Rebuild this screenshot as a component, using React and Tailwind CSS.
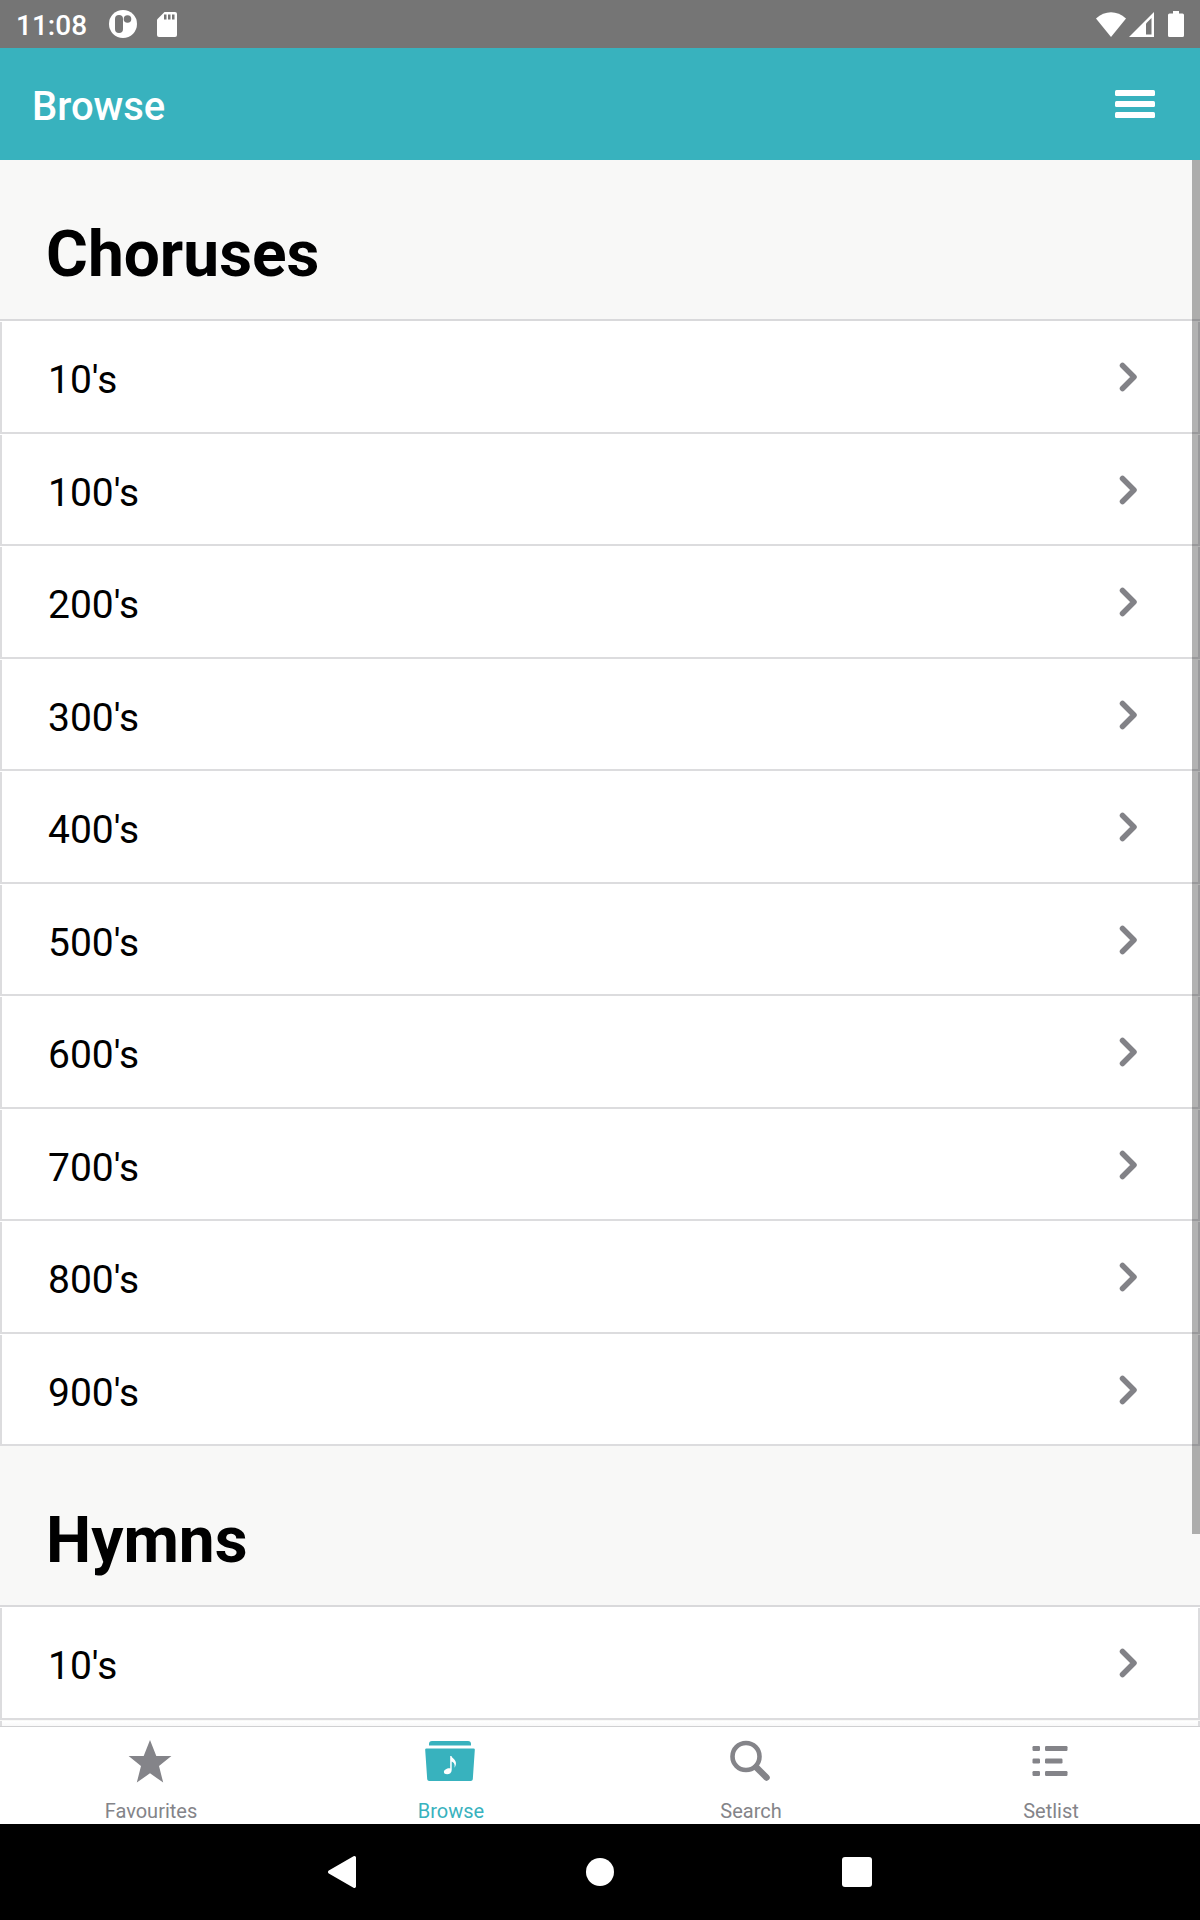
import { useState } from 'react'

const sections = [
    {
        title: 'Choruses',
        items: ["10's", "100's", "200's", "300's", "400's", "500's", "600's", "700's", "800's", "900's"],
    },
    {
        title: 'Hymns',
        items: ["10's"],
    },
]

function StarIcon() {
    return (
        <svg className="h-11 w-13" viewBox="0 0 52 44" fill="currentColor">
            <path d="M26 1l6.3 16H47.4L35 27l4.2 16.6L26 34.2l-13.2 9.4L17 27 4.6 17h15.1z" />
        </svg>
    )
}

function BrowseIcon() {
    return (
        <svg className="h-11 w-13" viewBox="0 0 52 44" fill="currentColor">
            <path d="M5 6.5V5a3 3 0 0 1 3-3h36a3 3 0 0 1 3 3v1.5z" />
            <path
                fillRule="evenodd"
                d="M2.5 9.5h47a1.3 1.3 0 0 1 1.3 1.5l-2 29.3a2 2 0 0 1-2 1.7H5.2a2 2 0 0 1-2-1.7L1.2 11a1.3 1.3 0 0 1 1.3-1.5zM26.2 17v12.4c-3.2-.4-6.3 1.6-6.3 3.7 0 1.5 1.3 2.2 3.2 2.2 2.5 0 4.6-1.5 4.6-4.3V22.5c2.2.8 3.5 2.9 2.7 6.2 2.4-3.5 1.8-6.3-.3-8.5C28.6 18.900 27.6 18 27.5 17z"
            />
        </svg>
    )
}

function SearchIcon() {
    return (
        <svg className="h-11 w-13" viewBox="0 0 52 44" fill="none" stroke="currentColor">
            <circle cx="22" cy="17.5" r="13.5" strokeWidth="4.6" />
            <path d="M32.5 28.5l10 10" strokeWidth="6.5" strokeLinecap="round" />
        </svg>
    )
}

function SetlistIcon() {
    return (
        <svg className="h-11 w-13" viewBox="0 0 52 44" fill="currentColor">
            <rect x="8.5" y="7" width="7.5" height="5" rx="1.2" />
            <rect x="21" y="7" width="22.5" height="5" rx="1.2" />
            <rect x="8.5" y="19.5" width="7.5" height="5" rx="1.2" />
            <rect x="21" y="19.5" width="17.5" height="5" rx="1.2" />
            <rect x="8.5" y="32" width="7.5" height="5" rx="1.2" />
            <rect x="21" y="32" width="22.5" height="5" rx="1.2" />
        </svg>
    )
}

const tabs = [
    { id: 'favourites', label: 'Favourites', Icon: StarIcon },
    { id: 'browse', label: 'Browse', Icon: BrowseIcon },
    { id: 'search', label: 'Search', Icon: SearchIcon },
    { id: 'setlist', label: 'Setlist', Icon: SetlistIcon },
]

function StatusBar() {
    return (
        <div className="flex h-12 shrink-0 items-center justify-between bg-[#757575] px-4 text-white">
            <div className="flex items-center">
                <span className="pt-1 text-[28px] leading-8 font-medium">11:08</span>
                <svg className="ml-[22px] h-7 w-7" viewBox="0 0 28 28">
                    <circle cx="14" cy="14" r="14" fill="white" />
                    <rect x="6" y="5" width="8" height="18" rx="4" fill="#757575" />
                    <circle cx="18.5" cy="9" r="3.8" fill="#757575" />
                </svg>
                <svg className="ml-5 h-[25px] w-5" viewBox="0 0 20 25">
                    <path d="M7.5 0H18a2 2 0 0 1 2 2v21a2 2 0 0 1-2 2H2a2 2 0 0 1-2-2V7.5z" fill="white" />
                    <path d="M7 2.5h2.5v5H7zM11 2.5h2.5v5H11zM15 2.5h2.5v5H15z" fill="#757575" />
                </svg>
            </div>
            <div className="flex items-center">
                <svg className="h-[25px] w-[30px]" viewBox="0 0 30 25" fill="white">
                    <path d="M15 25L0 6.5C9 -2 21 -2 30 6.5z" />
                </svg>
                <svg className="ml-[3px] h-[25px] w-[25px]" viewBox="0 0 25 25">
                    <path d="M25 0v25H0z" fill="white" />
                    <path d="M17 11.5l5.5-5.5v16.5H17z" fill="#757575" />
                </svg>
                <svg className="ml-3.5 h-[26px] w-4" viewBox="0 0 16 26" fill="white">
                    <path d="M5 0h6v2.5h3.5A1.5 1.5 0 0 1 16 4v20.5a1.5 1.5 0 0 1-1.5 1.5h-13A1.5 1.5 0 0 1 0 24.5V4a1.5 1.5 0 0 1 1.5-1.5H5z" />
                </svg>
            </div>
        </div>
    )
}

function ListRow({ label }) {
    return (
        <li className="flex h-[112px] border-b-2 border-[#dcdcde] bg-white pt-px odd:h-[113px]">
            <button className="flex w-full items-center justify-between border-x-2 border-[#dcdcde] pr-[60px] pl-[46px] text-left">
                <span className="pt-1.5 text-[39px] leading-[48px] text-black">{label}</span>
                <svg className="h-8 w-5" viewBox="0 0 20 32" fill="none" stroke="#828287" strokeWidth="5.5" strokeLinecap="round" strokeLinejoin="round">
                    <path d="M4.5 4.5l11.5 11.5-11.5 11.5" />
                </svg>
            </button>
        </li>
    )
}

export default function App() {
    const [activeTab, setActiveTab] = useState('browse')

    return (
        <div className="flex h-screen flex-col overflow-hidden bg-[#f8f8f7] font-['Roboto',sans-serif]">
            <StatusBar />

            {/* Header */}
            <header className="flex h-28 shrink-0 items-center justify-between bg-[#38b2be] pr-[45px] pl-8 text-white">
                <h1 className="pt-1.5 text-[40px] leading-[48px] font-medium">Browse</h1>
                <button aria-label="Menu">
                    <svg className="h-7 w-10" viewBox="0 0 40 28" fill="currentColor">
                        <rect width="40" height="6" rx="1.5" />
                        <rect y="11" width="40" height="6" rx="1.5" />
                        <rect y="22" width="40" height="6" rx="1.5" />
                    </svg>
                </button>
            </header>

            {/* Song book list */}
            <main className="relative min-h-0 flex-1 overflow-hidden">
                {sections.map((section) => (
                    <section key={section.title}>
                        <h2 className="border-b-2 border-[#d9d9db] pt-[61px] pb-[30px] pl-[46px] text-[64px] leading-[68px] font-bold text-black">
                            {section.title}
                        </h2>
                        <ul>
                            {section.items.map((item) => (
                                <ListRow key={item} label={item} />
                            ))}
                        </ul>
                    </section>
                ))}
                {/* Top edge of the next row */}
                <div className="mt-px h-2 border-x-2 border-[#dcdcde] bg-linear-to-b from-white to-[#f4f4f5]" />
                {/* Scroll indicator */}
                <div className="absolute top-0 right-0 h-[1374px] max-h-full w-2 bg-black/30" />
            </main>

            {/* Tabs */}
            <nav className="grid h-[98px] shrink-0 grid-cols-4 border-t border-[#d0d0d2] bg-white">
                {tabs.map(({ id, label, Icon }) => (
                    <button
                        key={id}
                        onClick={() => setActiveTab(id)}
                        className={`flex flex-col items-center justify-between pt-3 pb-px ${activeTab === id ? 'text-[#38b2be]' : 'text-[#848489]'}`}
                    >
                        <Icon />
                        <span className="pl-0.5 text-[20px] leading-6">{label}</span>
                    </button>
                ))}
            </nav>

            {/* System buttons */}
            <div className="flex h-24 shrink-0 items-center justify-center gap-[228px] bg-black text-white">
                <button aria-label="Back">
                    <svg className="h-8 w-[30px]" viewBox="0 0 30 32" fill="currentColor">
                        <path d="M25.5 .3a1.6 1.6 0 0 1 2.5 1.4v28.6a1.6 1.6 0 0 1-2.5 1.4L.8 17.4a1.6 1.6 0 0 1 0-2.8z" />
                    </svg>
                </button>
                <button aria-label="Home" className="h-7 w-7 rounded-full bg-white" />
                <button aria-label="Recent apps" className="h-[30px] w-[30px] rounded-[3px] bg-white" />
            </div>
        </div>
    )
}
